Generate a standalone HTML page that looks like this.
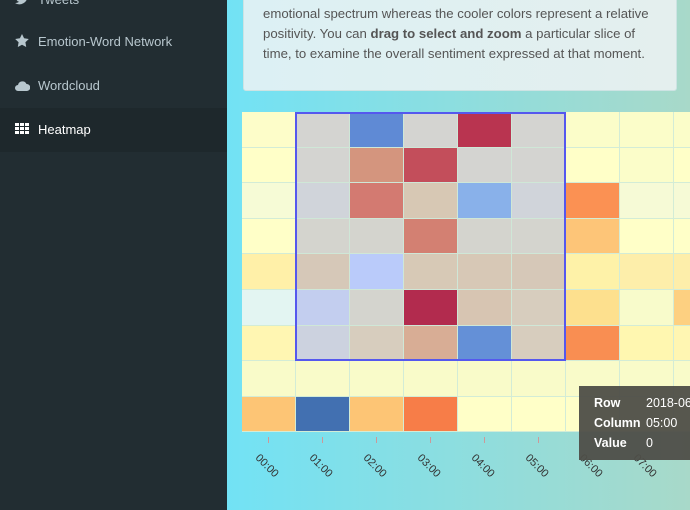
<!DOCTYPE html>
<html><head><meta charset="utf-8"><style>
*{margin:0;padding:0;box-sizing:border-box}
body{width:690px;height:510px;overflow:hidden;position:relative;font-family:"Liberation Sans",sans-serif;background:linear-gradient(90deg,#72e2f5 227px,#a8d9c9 690px)}
.side{position:absolute;left:0;top:0;width:227px;height:510px;background:#222d32}
.item{position:absolute;left:0;width:227px;height:44px;color:#b8c7ce;font-size:13px;line-height:44px;padding-left:38px}
.item.act{background:#1e282c;color:#fff}
.ic{position:absolute;left:15px;top:0;color:#b8c7ce}
.panel{position:absolute;left:243px;top:-10px;width:434px;height:101px;background:linear-gradient(90deg,#dcf0f4,#e4efee);border:1px solid #cde3e3;border-radius:3px;color:#555;font-size:13.2px;line-height:20px;padding:0 0 0 19px}
.grid{position:absolute;left:242px;top:112px;width:448px;height:320px;display:grid;grid-template-columns:repeat(9,53px);grid-template-rows:repeat(9,34.6px);gap:1px;background:#d3ecd6}
.sel{position:absolute;left:295px;top:112px;width:271px;height:249px;border:2px solid #5558ee;background:rgba(120,120,255,0.04)}
.tt{position:absolute;left:579px;top:386px;width:120px;height:74px;background:rgba(78,78,72,0.95);color:#fff;font-size:12.5px;padding:7px 0 0 15px;line-height:20px}
.tt b{display:inline-block;width:52px}
.tick{position:absolute;top:437px;width:1px;height:6px;background:#c99}
.lab{position:absolute;top:460px;font-size:11px;color:#333;transform:rotate(45deg);transform-origin:center}
</style></head><body>
<div class="side">
<div class="item" style="top:-22px"><span class="ic"><svg width="14" height="12" viewBox="0 0 14 12" style="vertical-align:-1px"><path d="M14 1.5c-.5.2-1 .4-1.6.4.6-.4 1-.9 1.2-1.5-.5.3-1.1.5-1.8.7A2.8 2.8 0 0 0 7 3.6 8 8 0 0 1 1 .6a2.8 2.8 0 0 0 .9 3.8c-.5 0-.9-.2-1.3-.4 0 1.4 1 2.5 2.3 2.8-.4.1-.9.1-1.3 0 .4 1.1 1.4 1.9 2.6 2A5.7 5.7 0 0 1 0 10a8 8 0 0 0 12.4-7.1c.6-.4 1.1-.9 1.6-1.4z" fill="#b8c7ce"/></svg></span>Tweets</div>
<div class="item" style="top:20px"><span class="ic"><svg width="14" height="13" viewBox="0 0 14 13" style="vertical-align:-1px"><path d="M7 0l2.1 4.3 4.7.7-3.4 3.3.8 4.7L7 10.8 2.8 13l.8-4.7L.2 5l4.7-.7z" fill="#b8c7ce"/></svg></span>Emotion-Word Network</div>
<div class="item" style="top:64px"><span class="ic"><svg width="15" height="10" viewBox="0 0 15 10" style="vertical-align:-1px"><path d="M3 10a3 3 0 0 1 0-6a4.5 4.5 0 0 1 8.5-1a3.5 3.5 0 0 1 0.5 7z" fill="#b8c7ce"/></svg></span>Wordcloud</div>
<div class="item act" style="top:108px"><span class="ic"><svg width="14" height="11" viewBox="0 0 14 11"><g fill="#fff"><rect x="0" y="0" width="4" height="3"/><rect x="5" y="0" width="4" height="3"/><rect x="10" y="0" width="4" height="3"/><rect x="0" y="4" width="4" height="3"/><rect x="5" y="4" width="4" height="3"/><rect x="10" y="4" width="4" height="3"/><rect x="0" y="8" width="4" height="3"/><rect x="5" y="8" width="4" height="3"/><rect x="10" y="8" width="4" height="3"/></g></svg></span>Heatmap</div>
</div>
<div class="panel"><div style="height:13px"></div>emotional spectrum whereas the cooler colors represent a relative<br>positivity. You can <b>drag to select and zoom</b> a particular slice of<br>time, to examine the overall sentiment expressed at that moment.</div>
<div class="grid">
<div style="background:#fdfdc9"></div><div style="background:#d8d8d0"></div><div style="background:#5e8bd4"></div><div style="background:#d8d8d0"></div><div style="background:#bc3149"></div><div style="background:#d8d8d0"></div><div style="background:#fbfdc9"></div><div style="background:#fbfdc9"></div><div style="background:#fbfdc9"></div>
<div style="background:#ffffc8"></div><div style="background:#d8d8d0"></div><div style="background:#d89679"></div><div style="background:#c64c55"></div><div style="background:#d8d8d0"></div><div style="background:#d8d8d0"></div><div style="background:#ffffc8"></div><div style="background:#fbfdc9"></div><div style="background:#ffffc8"></div>
<div style="background:#f6fbd6"></div><div style="background:#d4d8d9"></div><div style="background:#d77a6c"></div><div style="background:#dbcbb1"></div><div style="background:#8ab3ea"></div><div style="background:#d4d8d9"></div><div style="background:#fb9153"></div><div style="background:#f6fad6"></div><div style="background:#f6fad6"></div>
<div style="background:#ffffc8"></div><div style="background:#d8d8cc"></div><div style="background:#d8d8cc"></div><div style="background:#d7806d"></div><div style="background:#d8d8cc"></div><div style="background:#d8d8cc"></div><div style="background:#fdc578"></div><div style="background:#ffffc8"></div><div style="background:#ffffc8"></div>
<div style="background:#fff0a8"></div><div style="background:#dacbb6"></div><div style="background:#bdcffa"></div><div style="background:#dbcdb4"></div><div style="background:#dbcbb4"></div><div style="background:#dacbb6"></div><div style="background:#fef2a8"></div><div style="background:#fdeeaa"></div><div style="background:#fdeeaa"></div>
<div style="background:#e3f5f2"></div><div style="background:#c6d2ef"></div><div style="background:#d8d8cc"></div><div style="background:#b52847"></div><div style="background:#dbc8af"></div><div style="background:#dbd1bc"></div><div style="background:#fde08e"></div><div style="background:#f8fbcb"></div><div style="background:#fdd081"></div>
<div style="background:#fff6b2"></div><div style="background:#d0d6de"></div><div style="background:#dbd1bc"></div><div style="background:#dcaf91"></div><div style="background:#6391d6"></div><div style="background:#dbd1bc"></div><div style="background:#f98e52"></div><div style="background:#fff7b0"></div><div style="background:#fff6b2"></div>
<div style="background:#f9fbc9"></div><div style="background:#f9fbc9"></div><div style="background:#f9fbc9"></div><div style="background:#f9fbc9"></div><div style="background:#f9fbc9"></div><div style="background:#f9fbc9"></div><div style="background:#f9fbc9"></div><div style="background:#f9fbc9"></div><div style="background:#f9fbc9"></div>
<div style="background:#fdc575"></div><div style="background:#4270b1"></div><div style="background:#fdc575"></div><div style="background:#f77d48"></div><div style="background:#ffffc8"></div><div style="background:#ffffc8"></div><div style="background:#ffffc8"></div><div style="background:#ffffc8"></div><div style="background:#ffffc8"></div>
</div>
<div class="sel"></div>
<div class="tick" style="left:268px"></div><div class="tick" style="left:322px"></div><div class="tick" style="left:376px"></div><div class="tick" style="left:430px"></div><div class="tick" style="left:484px"></div><div class="tick" style="left:538px"></div><div class="tick" style="left:592px"></div><div class="tick" style="left:646px"></div>
<div class="lab" style="left:253px">00:00</div><div class="lab" style="left:307px">01:00</div><div class="lab" style="left:361px">02:00</div><div class="lab" style="left:415px">03:00</div><div class="lab" style="left:469px">04:00</div><div class="lab" style="left:523px">05:00</div><div class="lab" style="left:577px">06:00</div><div class="lab" style="left:631px">07:00</div>
<div class="tt"><b>Row</b>2018-06<br><b>Column</b>05:00<br><b>Value</b>0</div>
</body></html>
